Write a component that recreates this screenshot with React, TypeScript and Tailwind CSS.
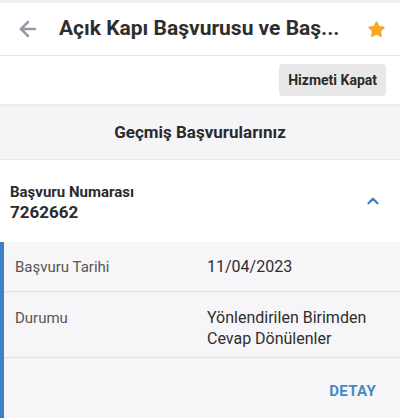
import { ArrowLeft, ChevronUp, Star } from "lucide-react";

const rows = [
  { label: "Başvuru Tarihi", value: ["11/04/2023"], pad: "pt-[14px] pb-[13px]" },
  { label: "Durumu", value: ["Yönlendirilen Birimden", "Cevap Dönülenler"], pad: "pt-[15px] pb-[8px]" },
];

export default function App() {
  return (
    <div
      className="w-[400px] h-[418px] overflow-hidden bg-[#f4f4f6] text-[#2b2b2b]"
      style={{ fontFamily: "Roboto, 'Liberation Sans', sans-serif" }}
    >
      {/* üst bar */}
      <div className="h-[3px] bg-[#f0f0f0]" />
      <header className="h-[53px] bg-white flex items-center pl-[16px] pr-[14px] border-b border-[#e6e6e6]">
        <ArrowLeft className="w-[24px] h-[24px] text-[#9a9aa6]" strokeWidth={2.5} />
        <h1 className="ml-[19px] flex-1 text-[21px] font-bold text-[#2e2e2e] truncate">
          Açık Kapı Başvurusu ve Baş...
        </h1>
        <Star className="w-[19px] h-[19px] text-[#f9a825]" fill="#f9a825" strokeWidth={1} />
      </header>

      {/* hizmet kapat */}
      <div className="h-[51px] bg-white flex items-center justify-end pr-[14px] border-b-[3px] border-[#ededed]">
        <button className="h-[32px] px-[9px] rounded-[4px] bg-[#e8e8e8] text-[14px] font-bold text-[#2b2b2b]">
          Hizmeti Kapat
        </button>
      </div>

      {/* geçmiş başvurular */}
      <div className="h-[53px] flex items-center justify-center border-b border-[#e8e8e8] bg-[#f5f5f7]">
        <span className="text-[17px] font-bold text-[#2b2b2b]">Geçmiş Başvurularınız</span>
      </div>

      <div className="bg-white">
        <div className="h-[82px] flex items-center pl-[10px] pr-[18px]">
          <div className="flex-1 mt-[1px]">
            <div className="text-[15px] font-bold leading-[20px] text-[#2b2b2b]">Başvuru Numarası</div>
            <div className="text-[17px] font-bold leading-[20px] text-[#2b2b2b]">7262662</div>
          </div>
          <ChevronUp className="w-[18px] h-[18px] text-[#3b7dbf]" strokeWidth={3} />
        </div>

        <div className="bg-[#f6f6f8] border-l-[4px] border-[#3d80c4]">
          {rows.map((r) => (
            <div key={r.label} className={`flex pl-[11px] border-b border-[#e2e2e4] ${r.pad}`}>
              <div className="w-[192px] text-[15px] leading-[22px] text-[#555]">{r.label}</div>
              <div className="text-[16px] leading-[21px] text-[#2e2e2e]">
                {r.value.map((v) => (
                  <div key={v}>{v}</div>
                ))}
              </div>
            </div>
          ))}
          <div className="h-[66px] flex items-center justify-end pr-[24px]">
            <span className="text-[15px] font-bold text-[#4a88c4] tracking-[0.3px]">DETAY</span>
          </div>
        </div>
      </div>
    </div>
  );
}
